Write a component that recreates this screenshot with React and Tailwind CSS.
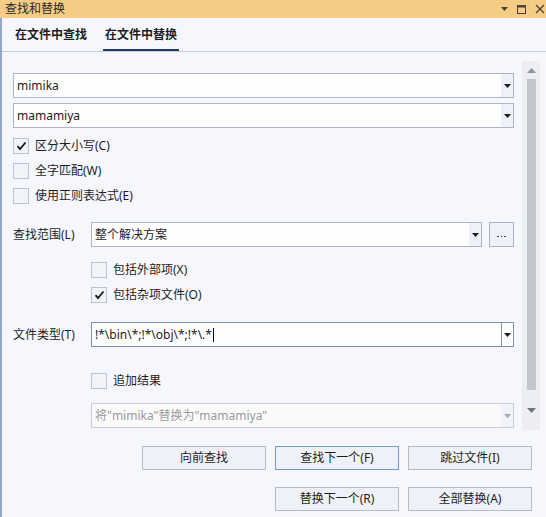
import React from "react";

const font = { fontFamily: "'Noto Sans', 'Noto Sans CJK SC', sans-serif" };

function Caret({ color = "#1e1e1e" }) {
  return (
    <svg width="7" height="4" viewBox="0 0 7 4">
      <path d="M0 0H7L3.5 4Z" fill={color} />
    </svg>
  );
}

function Combo({ value, focused, disabled, className = "" }) {
  const border = focused
    ? "border-[#7a93c4]"
    : disabled
    ? "border-[#c9cdd6]"
    : "border-[#aeb6c6]";
  return (
    <div
      className={`flex h-[25px] items-stretch border ${border} ${
        disabled ? "bg-[#fafafb]" : "bg-[#fdfdfd]"
      } ${className}`}
    >
      <div
        className={`flex flex-1 items-center pl-[3px] ${
          disabled ? "text-[#9b9b9b]" : "text-[#1e1e1e]"
        }`}
      >
        {value}
      </div>
      <div
        className={`flex w-[12px] items-center justify-center ${
          focused ? "border-l border-[#7a93c4] bg-[#fdfdfd]" : disabled ? "bg-[#f1f3f8]" : "bg-[#eef1f8]"
        }`}
      >
        <Caret color={disabled ? "#a4a8b2" : "#1e1e1e"} />
      </div>
    </div>
  );
}

function Check({ checked, label }) {
  return (
    <div className="flex h-[25px] items-center">
      <div className="flex h-[16px] w-[16px] items-center justify-center border border-[#bcc2ce] bg-[#f2f4f9]">
        {checked && (
          <svg width="11" height="10" viewBox="0 0 11 10">
            <path d="M1.5 5.2L4 8L9.5 1.5" fill="none" stroke="#1e1e1e" strokeWidth="1.9" />
          </svg>
        )}
      </div>
      <span className="ml-[6px] text-[#1e1e1e]">{label}</span>
    </div>
  );
}

function Btn({ children, primary }) {
  return (
    <div
      className={`flex h-[24px] w-[124px] items-center justify-center border bg-[#eef1f7] text-[#1e1e1e] ${
        primary ? "border-[#6f9ad6]" : "border-[#b6bac4]"
      }`}
    >
      {children}
    </div>
  );
}

export default function App() {
  return (
    <div
      className="flex h-[517px] w-[546px] flex-col overflow-hidden bg-[#f6f7fc] text-[12px] leading-none"
      style={font}
    >
      {/* title bar */}
      <div className="flex h-[18px] items-center justify-between bg-[#f5cc84] pl-[5px] pr-[1px] text-[#2a2a2a]">
        <span className="text-[12px]">查找和替换</span>
        <div className="flex items-center gap-[9px]">
          <Caret color="#4a4236" />
          <svg width="9" height="9" viewBox="0 0 9 9">
            <rect x="0.5" y="0.5" width="8" height="8" fill="none" stroke="#4a4236" />
            <rect x="0.5" y="0.5" width="8" height="2" fill="#4a4236" />
          </svg>
          <svg width="10" height="10" viewBox="0 0 10 10">
            <path d="M1 1L9 9M9 1L1 9" stroke="#4a4236" strokeWidth="1.3" />
          </svg>
        </div>
      </div>

      <div className="flex flex-1 flex-col border-l-[2px] border-[#93a6cb]">
        {/* tabs */}
        <div className="flex h-[34px] items-stretch border-b border-[#c8ccd8] pl-[12px] font-bold text-[#1e1e1e]">
          <div className="flex items-center px-[1px]">在文件中查找</div>
          <div className="ml-[15px] flex items-center border-b-[2px] border-[#233c6c] px-[2px] pt-[2px]">
            在文件中替换
          </div>
        </div>

        {/* options */}
        <div className="flex h-[380px] pl-[11px]">
          <div className="flex w-[501px] flex-col pt-[21px]">
            <Combo value="mimika" />
            <Combo value="mamamiya" className="mt-[5px]" />
            <div className="mt-[5px]">
              <Check checked label="区分大小写(C)" />
              <Check label="全字匹配(W)" />
              <Check label="使用正则表达式(E)" />
            </div>

            <div className="mt-[14px] flex items-center">
              <span className="w-[78px] text-[#1e1e1e]">查找范围(L)</span>
              <Combo value="整个解决方案" className="w-[391px]" />
              <div className="ml-[7px] flex h-[25px] w-[25px] items-center justify-center gap-[2px] border border-[#aab3c6] bg-[#eef1f8] pt-[4px]">
                <span className="h-[1.5px] w-[1.5px] bg-[#444]" />
                <span className="h-[1.5px] w-[1.5px] bg-[#444]" />
                <span className="h-[1.5px] w-[1.5px] bg-[#444]" />
              </div>
            </div>

            <div className="ml-[78px] mt-[10px]">
              <Check label="包括外部项(X)" />
              <Check checked label="包括杂项文件(O)" />
            </div>

            <div className="mt-[15px] flex items-center">
              <span className="w-[78px] text-[#1e1e1e]">文件类型(T)</span>
              <Combo
                focused
                className="flex-1"
                value={
                  <span className="flex items-center">
                    !*\bin\*;!*\obj\*;!*\.*
                    <span className="ml-[1px] inline-block h-[14px] w-[1px] bg-[#000]" />
                  </span>
                }
              />
            </div>

            <div className="ml-[78px] mt-[21px]">
              <Check label="追加结果" />
            </div>
            <Combo
              disabled
              value={'将"mimika"替换为"mamamiya"'}
              className="ml-[78px] mt-[10px]"
            />
          </div>

          {/* scrollbar */}
          <div className="ml-[8px] mt-[9px] flex h-[369px] w-[18px] flex-col items-center bg-[#eceef4]">
            <div className="flex h-[18px] items-center">
              <svg width="9" height="5" viewBox="0 0 9 5">
                <path d="M0 5H9L4.5 0Z" fill="#8d93a2" />
              </svg>
            </div>
            <div className="h-[311px] w-[9px] bg-[#c3c5cc]" />
            <div className="flex flex-1 items-center">
              <svg width="9" height="5" viewBox="0 0 9 5">
                <path d="M0 0H9L4.5 5Z" fill="#6f7584" />
              </svg>
            </div>
          </div>
        </div>

        {/* buttons */}
        <div className="flex flex-col items-end gap-[17px] pr-[14px] pt-[14px]">
          <div className="flex gap-[9px]">
            <Btn>向前查找</Btn>
            <Btn primary>查找下一个(F)</Btn>
            <Btn>跳过文件(I)</Btn>
          </div>
          <div className="flex gap-[9px]">
            <Btn>替换下一个(R)</Btn>
            <Btn>全部替换(A)</Btn>
          </div>
        </div>
      </div>
    </div>
  );
}
